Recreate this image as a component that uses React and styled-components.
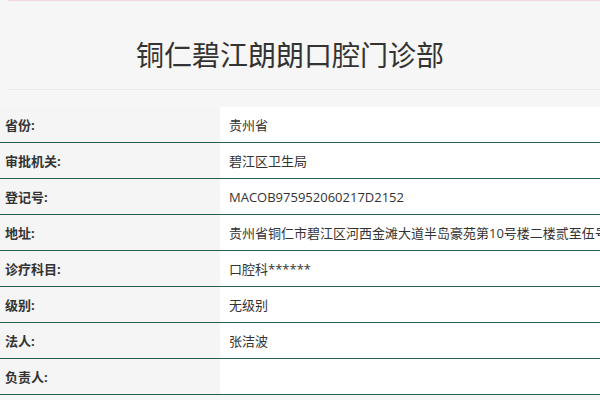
import React from "react";
import styled, { createGlobalStyle } from "styled-components";

const GlobalStyle = createGlobalStyle`
    html, body {
        margin: 0;
        padding: 0;
        background: #f6f6f6;
        font-family: "Open Sans", "Noto Sans CJK SC", sans-serif;
        color: #333;
        overflow: hidden;
    }
`;

const Page = styled.div`
    width: 600px;
    height: 400px;
    overflow: hidden;
`;

const Header = styled.div`
    margin-left: 8px;
    height: 90px;
    padding: 18px 28px 0 0;
    border-top: 1px solid #f0d8dc;
    border-bottom: 1px solid #ebebeb;
    box-sizing: border-box;
    display: flex;
    align-items: center;
    justify-content: center;
`;

const Title = styled.h1`
    margin: 0;
    font-family: "Noto Sans CJK SC", sans-serif;
    font-size: 28px;
    font-weight: 400;
    color: #333;
    white-space: nowrap;
`;

const Table = styled.div`
    margin-top: 17px;
    width: 600px;
`;

const Row = styled.div`
    display: grid;
    grid-template-columns: 220px 1fr;
    height: 36px;
    border-bottom: 1px solid #285f47;
    box-sizing: border-box;
`;

const Label = styled.div`
    background: #f5f5f5;
    padding-left: 5px;
    display: flex;
    align-items: center;
    font-size: 13px;
    font-weight: 700;
    color: #333;
`;

const Value = styled.div`
    background: #fff;
    padding-left: 9px;
    display: flex;
    align-items: center;
    font-size: 13px;
    color: #333;
    white-space: nowrap;
    overflow: hidden;
`;

const rows = [
    ["省份:", "贵州省"],
    ["审批机关:", "碧江区卫生局"],
    ["登记号:", "MACOB975952060217D2152"],
    ["地址:", "贵州省铜仁市碧江区河西金滩大道半岛豪苑第10号楼二楼贰至伍号门面"],
    ["诊疗科目:", "口腔科******"],
    ["级别:", "无级别"],
    ["法人:", "张洁波"],
    ["负责人:", ""],
];

const App = () => {
    return (
        <>
            <GlobalStyle />
            <Page>
                <Header>
                    <Title>铜仁碧江朗朗口腔门诊部</Title>
                </Header>
                <Table>
                    {rows.map(([label, value]) => (
                        <Row key={label}>
                            <Label>{label}</Label>
                            <Value>{value}</Value>
                        </Row>
                    ))}
                </Table>
            </Page>
        </>
    );
};

export default App;
